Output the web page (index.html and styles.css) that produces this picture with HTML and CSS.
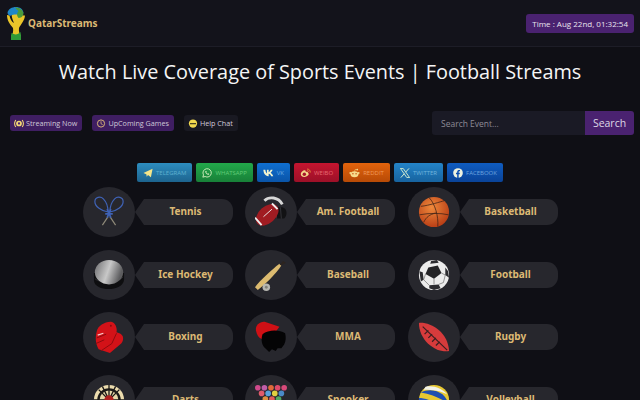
FILE: index.html
```html
<!DOCTYPE html>
<html lang="en">

<head>
    <meta charset="UTF-8">
    <meta name="viewport" content="width=device-width, initial-scale=1.0">
    <title>QatarStreams</title>
    <link rel="stylesheet" href="styles.css">
</head>

<body>

    <header class="site-header">
        <a class="brand" href="#">
            <svg class="brand-logo" viewBox="0 0 18 33">
                <path d="M6 21 C3 17 0 14 0 8 L2.500 8.500 C3 12 5 15 7 16 C5.500 12 4 9 5 6 L13 6 C14.500 8 16 8.500 18 8.500 C17.500 14 14 17 12 21 C11.500 24 12.500 27 14 29 L14 33 L4 33 L4 29 C6 27 6.500 24 6 21 Z" fill="#eac52a"/>
                <path d="M0.500 6 C1 2 5 0 9 0 C13 0 16 2 16.500 6 C13 8.500 8 7 5 8 C3 9.500 1.500 8.500 0.500 6 Z" fill="#1f86c8"/>
                <path d="M8 0.500 C12 0 16.500 3 16.500 7 C15.500 10 13.500 11 11.500 11 C9.500 9 9.500 6 11.500 4 C10.500 3 9 2 8 0.500 Z" fill="#4b9a3a"/>
                <path d="M4.500 26 C7.500 28 11 28 13.500 25 L14 29 L14 33 L4 33 L4 29 Z" fill="#2f9a38"/>
            </svg>
            <span>QatarStreams</span>
        </a>
        <div class="clock">Time : Aug 22nd, 01:32:54</div>
    </header>

    <h1 class="page-title">Watch Live Coverage of Sports Events | Football Streams</h1>

    <div class="toolbar">
        <nav class="nav-pills">
            <a class="nav-pill purple" href="#">
                <svg viewBox="0 0 14 12"><path d="M2.500 1 C0.500 4 0.500 8 2.500 11 M11.500 1 C13.500 4 13.500 8 11.500 11" fill="none" stroke="#f2d675" stroke-width="1.500"/><circle cx="7" cy="6" r="4" fill="#f2d675"/><circle cx="7" cy="6" r="1.600" fill="#4a2270"/></svg>
                Streaming Now
            </a>
            <a class="nav-pill purple" href="#">
                <svg viewBox="0 0 12 12"><circle cx="6" cy="6" r="4.800" fill="none" stroke="#e5c27a" stroke-width="1.200"/><path d="M6 3 V6.300 L8.200 7.500" fill="none" stroke="#e5c27a"/></svg>
                UpComing Games
            </a>
            <a class="nav-pill dark" href="#">
                <svg viewBox="0 0 12 12"><circle cx="6" cy="6" r="5.500" fill="#f2d94e"/><path d="M2 5.500 H10 V7 H2 Z" fill="#33301c"/></svg>
                Help Chat
            </a>
        </nav>
        <form class="search">
            <input type="text" placeholder="Search Event...">
            <button type="button">Search</button>
        </form>
    </div>

    <div class="socials">
        <a class="social telegram" href="#">
            <svg viewBox="0 0 12 12"><path d="M0.500 6 L11.500 1 L9.500 11 L6 8.500 L4.500 10.500 L4 7.500 Z" fill="#f4e58a"/></svg>
            Telegram
        </a>
        <a class="social whatsapp" href="#">
            <svg viewBox="0 0 12 12"><path d="M1 11 L1.800 8.300 A5 5 0 1 1 3.700 10.200 Z" fill="none" stroke="#d8f0c0" stroke-width="1.100"/><path d="M4 3.500 C3.500 6 6 8.500 8.500 8 L8.500 6.800 L7.200 6.300 L6.700 6.900 C6 6.600 5.400 6 5.100 5.300 L5.700 4.800 L5.200 3.500 Z" fill="#d8f0c0"/></svg>
            WhatsApp
        </a>
        <a class="social vk" href="#">
            <svg class="wide" viewBox="0 0 14 10"><path d="M0.500 1 H3 C3.200 3.500 4 5 5 5.500 V1 H7.200 V4 C8.300 3.800 9.300 2.500 9.800 1 H12.200 C11.700 2.800 10.500 4 9.600 4.700 C10.700 5.300 12 6.500 13 9 H10.400 C9.800 7.400 8.700 6.300 7.200 6.100 V9 H6.500 C3 9 0.800 6 0.500 1 Z" fill="#f2f4d0"/></svg>
            VK
        </a>
        <a class="social weibo" href="#">
            <svg class="wide" viewBox="0 0 14 12"><path d="M1 7.500 C1 5 4 2.500 6 2.500 C7.500 2.500 7.500 4 7.300 4.700 C9 4 10.500 4.500 10 6 C11 6.300 11.500 7 11 8 C10 10 7.500 11 5.500 11 C3 11 1 9.500 1 7.500 Z" fill="#f5d98a"/><circle cx="5.500" cy="7.700" r="2.200" fill="#a8162c"/><path d="M9 1 C11.500 0.800 13.500 3 13 5.500 M9 3 C10.500 2.900 11.500 4 11.200 5" fill="none" stroke="#f0a040"/></svg>
            Weibo
        </a>
        <a class="social reddit" href="#">
            <svg class="wide" viewBox="0 0 14 12"><ellipse cx="7" cy="7.500" rx="5" ry="3.800" fill="#f7dc8c"/><circle cx="1.800" cy="6" r="1.300" fill="#f7dc8c"/><circle cx="12.200" cy="6" r="1.300" fill="#f7dc8c"/><circle cx="10.500" cy="1.700" r="1.100" fill="#f7dc8c"/><path d="M7 4 L8 1.500 L10 1.700" fill="none" stroke="#f7dc8c" stroke-width="0.700"/><circle cx="5" cy="7" r="0.900" fill="#c24a08"/><circle cx="9" cy="7" r="0.900" fill="#c24a08"/></svg>
            Reddit
        </a>
        <a class="social twitter" href="#">
            <svg viewBox="0 0 12 12"><path d="M0.500 0.500 H3.800 L11.500 11.500 H8.200 Z" fill="none" stroke="#d6eed0" stroke-width="1.100"/><path d="M10.800 0.500 L6.700 5 M5.200 6.800 L1 11.500" stroke="#d6eed0" stroke-width="1.200"/></svg>
            Twitter
        </a>
        <a class="social facebook" href="#">
            <svg viewBox="0 0 12 12"><circle cx="6" cy="6" r="5.800" fill="#eef2e0"/><path d="M5 12 V7.500 H3.600 V5.700 H5 V4.400 C5 3 6 2.300 7.200 2.300 L8.400 2.400 V3.900 H7.600 C7 3.900 6.800 4.200 6.800 4.700 V5.700 H8.300 L8 7.500 H6.800 V12 Z" fill="#0d4fb0"/></svg>
            Facebook
        </a>
    </div>

    <main class="sports">
        <a class="sport" href="#">
            <span class="sport-icon">
                <svg viewBox="0 0 34 34">
                    <path d="M18 22 L24 31 M16 22 L10 31" stroke="#8d8878" stroke-width="1.300"/>
                    <g fill="none" stroke="#3f62b5" stroke-width="1.300">
                        <path d="M16 17 C9 16 2 11 2 6 C2 1 8 0 11 3 C14 6 16 12 16 17 Z"/>
                        <path d="M18 17 C25 16 32 11 32 6 C32 1 26 0 23 3 C20 6 18 12 18 17 Z"/>
                        <path d="M15 14 L19 23 M19 14 L15 23 M13 19 H21" stroke-width="1.800"/>
                    </g>
                </svg>
            </span>
            <span class="sport-name">Tennis</span>
        </a>
        <a class="sport" href="#">
            <span class="sport-icon">
                <svg viewBox="0 0 34 34">
                    <path d="M10 5 C15 0 25 1 29 9" fill="none" stroke="#d8d8d8" stroke-width="3"/>
                    <path d="M18 12 H29 C34 13 35 20 31 24 H22 Z" fill="#121214"/>
                    <path d="M22 12 L23 24 M27 12 L28 24" stroke="#34343a" stroke-width="1"/>
                    <ellipse cx="13" cy="20" rx="14" ry="9" transform="rotate(-42 13 20)" fill="#a01c22"/>
                    <path d="M0 23 L7 31 M18 8 L24 14" stroke="#eee" stroke-width="2"/>
                    <path d="M9 22 L18 14" stroke="#eee" stroke-width="1"/>
                </svg>
            </span>
            <span class="sport-name">Am. Football</span>
        </a>
        <a class="sport" href="#">
            <span class="sport-icon">
                <svg viewBox="0 0 34 34">
                    <defs>
                        <radialGradient id="ball" cx="0.420" cy="0.350" r="0.700">
                            <stop offset="0" stop-color="#ef8a3c"/>
                            <stop offset="1" stop-color="#b63a14"/>
                        </radialGradient>
                    </defs>
                    <circle cx="17" cy="17" r="16" fill="url(#ball)"/>
                    <g fill="none" stroke="#3b2015" stroke-width="0.800">
                        <path d="M3 11 C12 10 24 6 28 5 M1.500 20 C12 18 24 18 32.500 20 M12 2 C18 8 22 22 21 32.500 M6 28 C9 22 12 20 19 18"/>
                    </g>
                </svg>
            </span>
            <span class="sport-name">Basketball</span>
        </a>
        <a class="sport" href="#">
            <span class="sport-icon">
                <svg viewBox="0 0 34 34">
                    <defs>
                        <linearGradient id="puck" x1="0" y1="0" x2="1" y2="0.300">
                            <stop offset="0" stop-color="#6c6c6e"/>
                            <stop offset="0.550" stop-color="#c8c8c8"/>
                            <stop offset="1" stop-color="#5c5c5e"/>
                        </linearGradient>
                    </defs>
                    <path d="M1 15 V23 C2 35 32 35 33 22 V15 Z" fill="#0e0e10"/>
                    <path d="M2 21 C7 26 27 26 32 19" fill="none" stroke="#2c2c30" stroke-width="1"/>
                    <ellipse cx="17" cy="14" rx="15" ry="13" fill="url(#puck)"/>
                </svg>
            </span>
            <span class="sport-name">Ice Hockey</span>
        </a>
        <a class="sport" href="#">
            <span class="sport-icon">
                <svg viewBox="0 0 34 34">
                    <path d="M0 30 C5 23 18 11 26 5 L28 7 C23 15 11 27 3 33 Z" fill="#dcbb70"/>
                    <path d="M26 6 L30 2 L33 4 L28 7 Z" fill="#2c2420"/>
                    <circle cx="12" cy="30" r="4" fill="#b6b6b0"/>
                    <circle cx="12" cy="30" r="1.500" fill="#808078"/>
                </svg>
            </span>
            <span class="sport-name">Baseball</span>
        </a>
        <a class="sport" href="#">
            <span class="sport-icon">
                <svg viewBox="0 0 34 34">
                    <circle cx="17" cy="17" r="16" fill="#ececec"/>
                    <path d="M11 9 L21 7 L25 15 L17 21 L8 16 Z" fill="#232326"/>
                    <path d="M14 2 L20 1 L22 4 L13 5 Z M29 9 L32 13 L33 20 L29 17 Z M1.500 13 L5 14 L6 22 L3 24 Z M12 28 L22 27 L24 31 L17 33 L12 31 Z" fill="#2b2b2f"/>
                    <path d="M8 16 L6 22 L12 28 M25 15 L29 17 L27 25 L22 27 M17 21 V27" fill="none" stroke="#666" stroke-width="0.700"/>
                </svg>
            </span>
            <span class="sport-name">Football</span>
        </a>
        <a class="sport" href="#">
            <span class="sport-icon">
                <svg viewBox="0 0 34 34">
                    <path d="M4 11 C5 5 14 0 20 1 C24 2 26 8 25 12 L28 13 C33 15 33 20 30 24 L18 34 L6 30 C3 25 2 18 4 11 Z" fill="#d31218"/>
                    <path d="M4 18 L14 14 M3 24 L12 20 M8 32 L20 24 L25 13" fill="none" stroke="#8a0a0e" stroke-width="1"/>
                    <path d="M5 15 L11 13" stroke="#f4d0d0" stroke-width="1.200"/>
                    <circle cx="19" cy="5" r="1" fill="#8a0a0e"/>
                </svg>
            </span>
            <span class="sport-name">Boxing</span>
        </a>
        <a class="sport" href="#">
            <span class="sport-icon">
                <svg viewBox="0 0 34 34">
                    <path d="M1 10 C0 4 6 0 11 1 L26 6 L20 14 L7 19 C3 17 2 14 1 10 Z" fill="#cf1015"/>
                    <path d="M8 14 C14 9 26 9 32 13 C33 17 33 21 31 25 L28 29 L24 29 L22 32 L18 30 L15 33 L12 30 C7 26 6 20 8 14 Z" fill="#040405"/>
                </svg>
            </span>
            <span class="sport-name">MMA</span>
        </a>
        <a class="sport" href="#">
            <span class="sport-icon">
                <svg viewBox="0 0 34 34">
                    <path d="M1 2 C14 1 32 12 33 32 C18 34 1 20 1 2 Z" fill="#d63b3c"/>
                    <path d="M5 6 L31 31 M7 14 L11 10 M11 18 L15 14 M15 22 L19 18 M19 26 L23 22" stroke="#3a1f20" stroke-width="1.300"/>
                </svg>
            </span>
            <span class="sport-name">Rugby</span>
        </a>
        <a class="sport" href="#">
            <span class="sport-icon">
                <svg viewBox="0 0 34 34">
                    <circle cx="17" cy="17" r="16" fill="#ecdcae"/>
                    <circle cx="17" cy="17" r="12.500" fill="#1c1a18"/>
                    <circle cx="17" cy="17" r="10" fill="#e8d8a8"/>
                    <path d="M17 1 V33 M1 17 H33 M6 6 L28 28 M28 6 L6 28 M10 2.500 L24 31.500 M24 2.500 L10 31.500" stroke="#1c1a18" stroke-width="1.400"/>
                    <circle cx="17" cy="17" r="5" fill="#b02020"/>
                </svg>
            </span>
            <span class="sport-name">Darts</span>
        </a>
        <a class="sport" href="#">
            <span class="sport-icon">
                <svg viewBox="0 0 34 34">
                    <circle cx="3" cy="4" r="3" fill="#d04a8c"/><circle cx="10" cy="4" r="3" fill="#c05ea8"/><circle cx="17" cy="4" r="3" fill="#e06a3a"/><circle cx="24" cy="4" r="3" fill="#e04a6a"/><circle cx="31" cy="4" r="3" fill="#d84a7a"/>
                    <circle cx="7" cy="10" r="3" fill="#e05a6a"/><circle cx="14" cy="10" r="3" fill="#5aa0d8"/><circle cx="21" cy="10" r="3" fill="#e0d040"/><circle cx="28" cy="10" r="3" fill="#4a8ac8"/>
                    <circle cx="11" cy="16" r="3" fill="#e09040"/><circle cx="18" cy="16" r="3" fill="#e05a5a"/><circle cx="25" cy="16" r="3" fill="#50a860"/>
                </svg>
            </span>
            <span class="sport-name">Snooker</span>
        </a>
        <a class="sport" href="#">
            <span class="sport-icon">
                <svg viewBox="0 0 34 34">
                    <circle cx="17" cy="17" r="16" fill="#e8c832"/>
                    <path d="M3 9 C10 5 20 6 26 11 C30 15 32 19 33 22 C28 17 16 11 3 9 Z" fill="#1f4fb0"/>
                    <path d="M8 3 C16 1 26 5 31 11 C24 7 16 6 6 6 Z" fill="#f2f2ea"/>
                    <path d="M1 15 C8 15 20 19 30 27 C26 31 22 33 17 33 C7 33 1 25 1 15 Z" fill="#2857b8"/>
                </svg>
            </span>
            <span class="sport-name">Volleyball</span>
        </a>
    </main>

</body>

</html>
```

FILE: styles.css
```css
* {
    box-sizing: border-box;
}

html,
body {
    height: 100%;
}

body {
    margin: 0;
    overflow: hidden;
    background-color: #0f0f15;
    color: #fff;
    font-family: "Open Sans", sans-serif;
}

a {
    text-decoration: none;
}

.site-header {
    display: flex;
    align-items: center;
    justify-content: space-between;
    height: 47px;
    padding: 0 6px 0 7px;
    background-color: #13131b;
    border-bottom: 1px solid #1d1d27;
}

.brand {
    display: flex;
    align-items: center;
    gap: 3px;
    color: #dcb974;
    font-family: "Noto Sans", sans-serif;
    font-size: 10px;
    font-weight: 700;
}

.brand-logo {
    width: 18px;
    height: 33px;
}

.clock {
    padding: 3px 6px;
    height: 19px;
    line-height: 13px;
    background-color: #4a2270;
    border-radius: 3px;
    color: #e9e4ee;
    font-size: 8px;
}

.page-title {
    margin: 11px 0 0;
    text-align: center;
    font-size: 19.850px;
    font-weight: 400;
    line-height: 28px;
    color: #f5f5f5;
}

.toolbar {
    display: flex;
    align-items: center;
    justify-content: space-between;
    margin-top: 25px;
    padding: 0 6px 0 10px;
}

.nav-pills {
    display: flex;
    gap: 10px;
}

.nav-pill {
    display: flex;
    align-items: center;
    gap: 2px;
    height: 16px;
    padding: 0 5px 0 4px;
    border-radius: 3px;
    color: #cfc8d8;
    font-size: 7.200px;
}

.nav-pill svg {
    width: 10px;
    height: 9px;
}

.nav-pill.purple {
    background-color: #3f1e62;
}

.nav-pill.dark {
    background-color: #191922;
}

.search {
    display: flex;
    width: 202px;
    height: 24px;
    margin: 0;
}

.search input {
    flex: 1;
    min-width: 0;
    padding: 0 9px;
    background-color: #1a1a25;
    border: 0;
    border-radius: 3px 0 0 3px;
    color: #fff;
    font-family: inherit;
    font-size: 8.500px;
}

.search input::placeholder {
    color: #8d8a96;
    opacity: 1;
}

.search button {
    width: 49px;
    padding: 0;
    background-color: #4a2270;
    border: 0;
    border-radius: 0 3px 3px 0;
    color: #ded8e6;
    font-family: inherit;
    font-size: 10.500px;
}

.socials {
    display: flex;
    justify-content: center;
    gap: 4px;
    margin-top: 28px;
}

.social {
    display: flex;
    align-items: center;
    gap: 3px;
    height: 19px;
    padding: 0 6px;
    border-radius: 2px;
    font-size: 6px;
    text-transform: uppercase;
}

.social svg {
    width: 10px;
    height: 10px;
}

.social svg.wide {
    width: 11px;
}

.telegram {
    background: linear-gradient(#2d8dbf, #1d648f);
    color: #5fb0cf;
}

.whatsapp {
    background: linear-gradient(#22a84a, #188038);
    color: #62cc78;
}

.vk {
    background: linear-gradient(#0f6fd0, #0a54a8);
    color: #6aaee6;
}

.weibo {
    background: linear-gradient(#c4152f, #9c1028);
    color: #e66a72;
}

.reddit {
    background: linear-gradient(#e2630c, #b74a06);
    color: #f09a5c;
}

.twitter {
    background: linear-gradient(#2484c8, #17639f);
    color: #70b4dc;
}

.facebook {
    background: linear-gradient(#0f5cc0, #0a4398);
    color: #6ea4de;
}

.sports {
    display: grid;
    grid-template-columns: repeat(3, 150px);
    grid-auto-rows: 50px;
    gap: 12.500px;
    justify-content: center;
    margin-top: 5px;
}

.sport {
    display: flex;
    align-items: center;
}

.sport-icon {
    display: flex;
    flex-shrink: 0;
    align-items: center;
    justify-content: center;
    width: 52px;
    height: 50px;
    background-color: #27272d;
    border-radius: 50%;
}

.sport-icon svg {
    width: 32px;
    height: 32px;
}

.sport-name {
    flex: 1;
    position: relative;
    height: 26px;
    margin-left: 9px;
    padding-right: 5px;
    background-color: #27272d;
    border-radius: 0 11px 11px 0;
    color: #dcb974;
    font-family: "Noto Sans", sans-serif;
    font-size: 10px;
    font-weight: 700;
    line-height: 25px;
    text-align: center;
}

.sport-name::before {
    content: "";
    position: absolute;
    top: 0;
    left: -9px;
    width: 0;
    height: 0;
    border-top: 13px solid transparent;
    border-bottom: 13px solid transparent;
    border-right: 9px solid #27272d;
}
```
